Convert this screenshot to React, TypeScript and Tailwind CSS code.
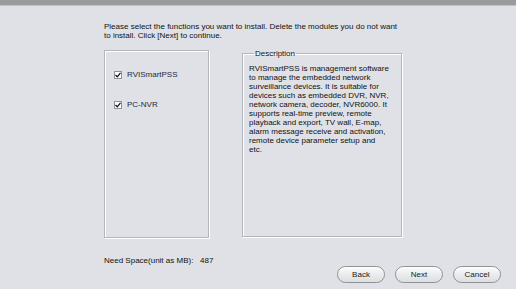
const font = { fontFamily: '"Liberation Sans", Arial, sans-serif' };

const descLines = [
  "RVISmartPSS is management software",
  "to manage the embedded network",
  "surveillance devices. It is suitable for",
  "devices such as embedded DVR, NVR,",
  "network camera, decoder, NVR6000. It",
  "supports real-time preview, remote",
  "playback and export, TV wall, E-map,",
  "alarm message receive and activation,",
  "remote device parameter setup and",
  "etc.",
];

function Check({ label }: { label: string }) {
  return (
    <label className="flex items-center gap-[5px] h-[9px]">
      <span className="w-[8px] h-[8px] bg-white border border-[#8f9296] flex items-center justify-center">
        <svg width="6" height="6" viewBox="0 0 6 6">
          <path d="M0.5 3 L2.3 4.8 L5.5 0.8" fill="none" stroke="#111" strokeWidth="1.3" />
        </svg>
      </span>
      <span className="text-[#232a38]">{label}</span>
    </label>
  );
}

function Button({ children }: { children: string }) {
  return (
    <button
      type="button"
      className="w-[48px] h-[17px] rounded-full border border-[#8e9195] bg-gradient-to-b from-[#fbfbfb] to-[#dcdde0] text-[8px] text-[#1a1a1a] shadow-[inset_0_1px_0_#fff]"
    >
      {children}
    </button>
  );
}

export default function App() {
  return (
    <div
      className="w-[516px] h-[289px] bg-[#dfe1e6] flex flex-col text-[8px] leading-[9px] text-[#111]"
      style={font}
    >
      <div className="h-[6px] bg-[#9b9b9b] border-b border-[#c2c2c2] shrink-0" />

      <div className="pl-[104px] pt-[16px] flex flex-col">
        <p className="w-[300px]">
          Please select the functions you want to install. Delete the modules you do not want to install. Click [Next] to continue.
        </p>

        <div className="flex mt-[10px] gap-[33px] items-start">
          <div className="w-[105px] h-[188px] border border-[#b3b6bb] shadow-[1px_1px_0_#fff,inset_1px_1px_0_#fff] flex flex-col gap-[21px] pt-[19px] pl-[9px]">
            <Check label="RVISmartPSS" />
            <Check label="PC-NVR" />
          </div>

          <fieldset className="w-[160px] h-[188px] -mt-[1px] border border-[#b3b6bb] shadow-[1px_1px_0_#fff,inset_1px_1px_0_#fff] px-[6px] pt-[6px]">
            <legend className="ml-[5px] px-[1px]">Description</legend>
            <p>
              {descLines.map((line) => (
                <span key={line} className="block whitespace-nowrap">
                  {line}
                </span>
              ))}
            </p>
          </fieldset>
        </div>

        <p className="mt-[18px]">Need Space(unit as MB):&nbsp;&nbsp;&nbsp;487</p>
      </div>

      <div className="flex justify-end gap-[10px] pr-[15px] mt-[1px]">
        <Button>Back</Button>
        <Button>Next</Button>
        <Button>Cancel</Button>
      </div>
    </div>
  );
}
